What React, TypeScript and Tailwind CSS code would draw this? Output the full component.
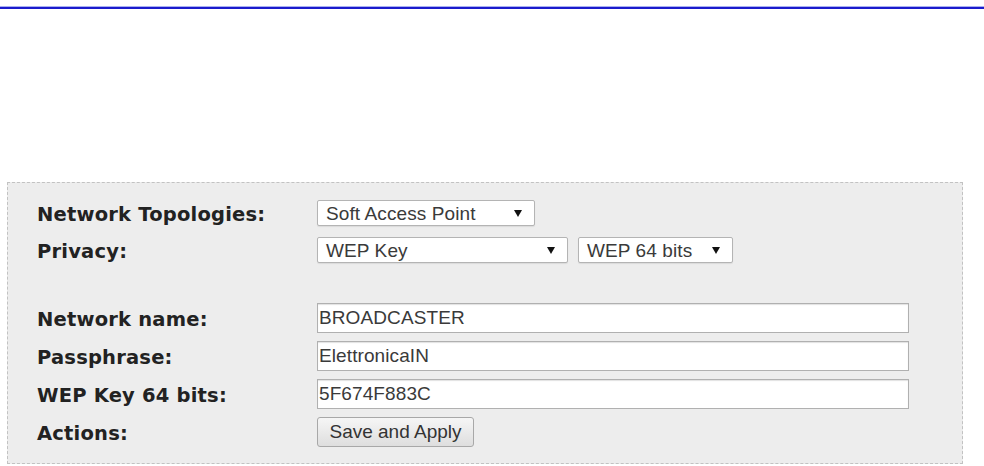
import type { ReactNode } from 'react';

const labelFont = { fontFamily: '"DejaVu Sans", Verdana, sans-serif' };
const fieldFont = { fontFamily: '"Liberation Sans", Arial, sans-serif' };

function Arrow() {
  return (
    <svg width="8" height="7" viewBox="0 0 8 7" className="shrink-0">
      <polygon points="0,0 8,0 4,7" fill="#111" />
    </svg>
  );
}

function Select({ value, width }: { value: string; width: string }) {
  return (
    <div
      className={`${width} h-[26px] flex items-center justify-between pl-[8px] pr-[12px] bg-white border border-[#b4b4b4] rounded-[2px] text-[19px] tracking-[0.1px] text-[#3a3a3a] shadow-[0_1px_1px_rgba(0,0,0,0.08)]`}
      style={fieldFont}
    >
      <span className="leading-none">{value}</span>
      <Arrow />
    </div>
  );
}

function TextInput({ value }: { value: string }) {
  return (
    <input
      readOnly
      value={value}
      className="w-[592px] h-[30px] px-[1px] bg-white border border-[#b0b0b0] shadow-[inset_0_1px_1px_rgba(0,0,0,0.12)] text-[19px] tracking-[0.1px] text-[#3a3a3a] outline-none"
      style={fieldFont}
    />
  );
}

function Row({ label, children }: { label: string; children: ReactNode }) {
  return (
    <div className="flex items-center">
      <div className="w-[280px] pt-[4px] text-[19.5px] tracking-[0.2px] font-bold text-[#222] leading-none" style={labelFont}>
        {label}
      </div>
      <div className="flex items-center gap-[10px]">{children}</div>
    </div>
  );
}

export default function App() {
  return (
    <div className="w-[984px] h-[466px] bg-white overflow-hidden">
      {/* header rule */}
      <div className="pt-[6px]">
        <div className="h-px bg-[#a9b0f2]" />
        <div className="h-[2px] bg-[#1b1bcc]" />
      </div>

      <div className="mt-[173px] ml-[7px] w-[956px] h-[282px] bg-[#ededed] border border-dashed border-[#c2c2c2] pt-[17px] pl-[29px]">
        <div className="flex flex-col gap-[11px]">
          <Row label="Network Topologies:">
            <Select value="Soft Access Point" width="w-[218px]" />
          </Row>
          <Row label="Privacy:">
            <Select value="WEP Key" width="w-[251px]" />
            <Select value="WEP 64 bits" width="w-[155px]" />
          </Row>
        </div>

        <div className="mt-[40px] flex flex-col gap-[8px]">
          <Row label="Network name:">
            <TextInput value="BROADCASTER" />
          </Row>
          <Row label="Passphrase:">
            <TextInput value="ElettronicaIN" />
          </Row>
          <Row label="WEP Key 64 bits:">
            <TextInput value="5F674F883C" />
          </Row>
          <Row label="Actions:">
            <button
              className="w-[157px] h-[30px] bg-gradient-to-b from-[#f6f6f6] to-[#dedede] border border-[#a8a8a8] rounded-[3px] text-[19px] text-[#333]"
              style={fieldFont}
            >
              Save and Apply
            </button>
          </Row>
        </div>
      </div>
    </div>
  );
}
